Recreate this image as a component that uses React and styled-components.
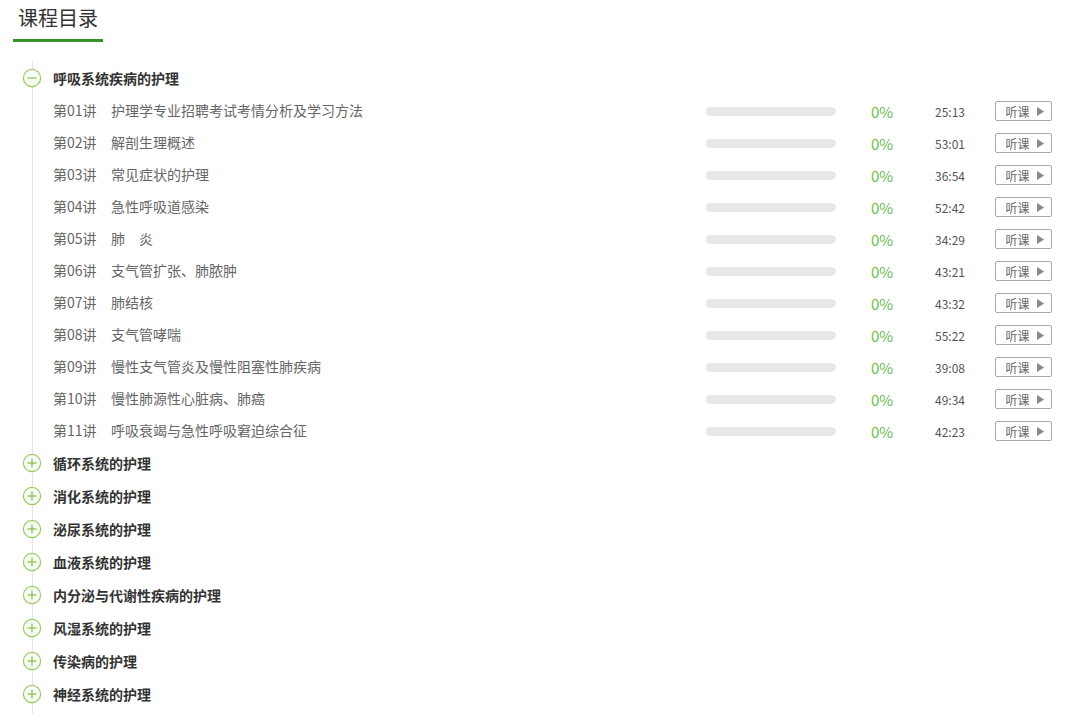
import React from "react";
import styled, { createGlobalStyle } from "styled-components";

const GlobalStyle = createGlobalStyle`
  body {
    margin: 0;
    background: #fff;
    font-family: "Noto Sans CJK SC", "Noto Sans", sans-serif;
  }
`;

const chapters = [
  {
    title: "呼吸系统疾病的护理",
    open: true,
    lessons: [
      ["第01讲", "护理学专业招聘考试考情分析及学习方法", "25:13"],
      ["第02讲", "解剖生理概述", "53:01"],
      ["第03讲", "常见症状的护理", "36:54"],
      ["第04讲", "急性呼吸道感染", "52:42"],
      ["第05讲", "肺\u3000炎", "34:29"],
      ["第06讲", "支气管扩张、肺脓肿", "43:21"],
      ["第07讲", "肺结核", "43:32"],
      ["第08讲", "支气管哮喘", "55:22"],
      ["第09讲", "慢性支气管炎及慢性阻塞性肺疾病", "39:08"],
      ["第10讲", "慢性肺源性心脏病、肺癌", "49:34"],
      ["第11讲", "呼吸衰竭与急性呼吸窘迫综合征", "42:23"],
    ],
  },
  { title: "循环系统的护理" },
  { title: "消化系统的护理" },
  { title: "泌尿系统的护理" },
  { title: "血液系统的护理" },
  { title: "内分泌与代谢性疾病的护理" },
  { title: "风湿系统的护理" },
  { title: "传染病的护理" },
  { title: "神经系统的护理" },
];

const Page = styled.div`
  width: 1072px;
  height: 714px;
  overflow: hidden;
`;

const Title = styled.h2`
  box-sizing: border-box;
  width: 90px;
  margin: 0 0 0 13px;
  padding: 3px 5px 6px;
  line-height: 30px;
  font-size: 20px;
  font-weight: normal;
  color: #333;
  border-bottom: 3px solid #3b8f2c;
`;

const List = styled.div`
  margin: 19px 0 0 32px;
  border-left: 1px solid #e6e6e6;
  padding-bottom: 20px;
`;

const ChapterRow = styled.div`
  display: flex;
  align-items: center;
  height: 33px;
  margin-left: -11px;
  gap: 11px;
  font-size: 14px;
  font-weight: bold;
  color: #333;
`;

const LessonRow = styled.div`
  display: flex;
  align-items: center;
  height: 32px;
  padding: 0 20px;
  font-size: 14px;
  color: #666;
`;

const Num = styled.span`
  width: 58px;
  flex-shrink: 0;
`;

const LessonTitle = styled.span`
  flex: 1;
`;

const Bar = styled.div`
  width: 130px;
  height: 9px;
  margin-top: 3px;
  border-radius: 5px;
  background: #e8e8e8;
`;

const Percent = styled.span`
  width: 64px;
  margin-left: 35px;
  padding-top: 3px;
  font-size: 15px;
  color: #6dbd4a;
`;

const Duration = styled.span`
  width: 60px;
  padding-top: 2px;
  font-size: 12px;
  color: #555;
`;

const ListenButton = styled.button`
  box-sizing: border-box;
  display: flex;
  align-items: center;
  justify-content: center;
  gap: 7px;
  width: 57px;
  height: 20px;
  margin-top: 2px;
  padding: 0 0 0 2px;
  border: 1px solid #a8a8a8;
  border-radius: 2px;
  background: #fff;
  font-family: inherit;
  font-size: 12px;
  color: #666;
`;

const ToggleIcon = ({ open }) => (
  <svg width="20" height="20" viewBox="0 0 20 20">
    <circle cx="10" cy="10" r="8.6" fill="#f8fcf4" stroke="#97cc64" strokeWidth="1.2" />
    <line x1="5.5" y1="10" x2="14.5" y2="10" stroke="#7fbf45" strokeWidth="1.2" />
    {!open && <line x1="10" y1="5.5" x2="10" y2="14.5" stroke="#7fbf45" strokeWidth="1.2" />}
  </svg>
);

const Play = () => (
  <svg width="7" height="9" viewBox="0 0 7 9">
    <path d="M0 0 L7 4.5 L0 9 Z" fill="#888" />
  </svg>
);

export default function App() {
  return (
    <Page>
      <GlobalStyle />
      <Title>课程目录</Title>
      <List>
        {chapters.map((c) => (
          <React.Fragment key={c.title}>
            <ChapterRow>
              <ToggleIcon open={c.open} />
              <span>{c.title}</span>
            </ChapterRow>
            {c.open &&
              c.lessons.map(([n, t, d]) => (
                <LessonRow key={n}>
                  <Num>{n}</Num>
                  <LessonTitle>{t}</LessonTitle>
                  <Bar />
                  <Percent>0%</Percent>
                  <Duration>{d}</Duration>
                  <ListenButton>
                    听课 <Play />
                  </ListenButton>
                </LessonRow>
              ))}
          </React.Fragment>
        ))}
      </List>
    </Page>
  );
}
